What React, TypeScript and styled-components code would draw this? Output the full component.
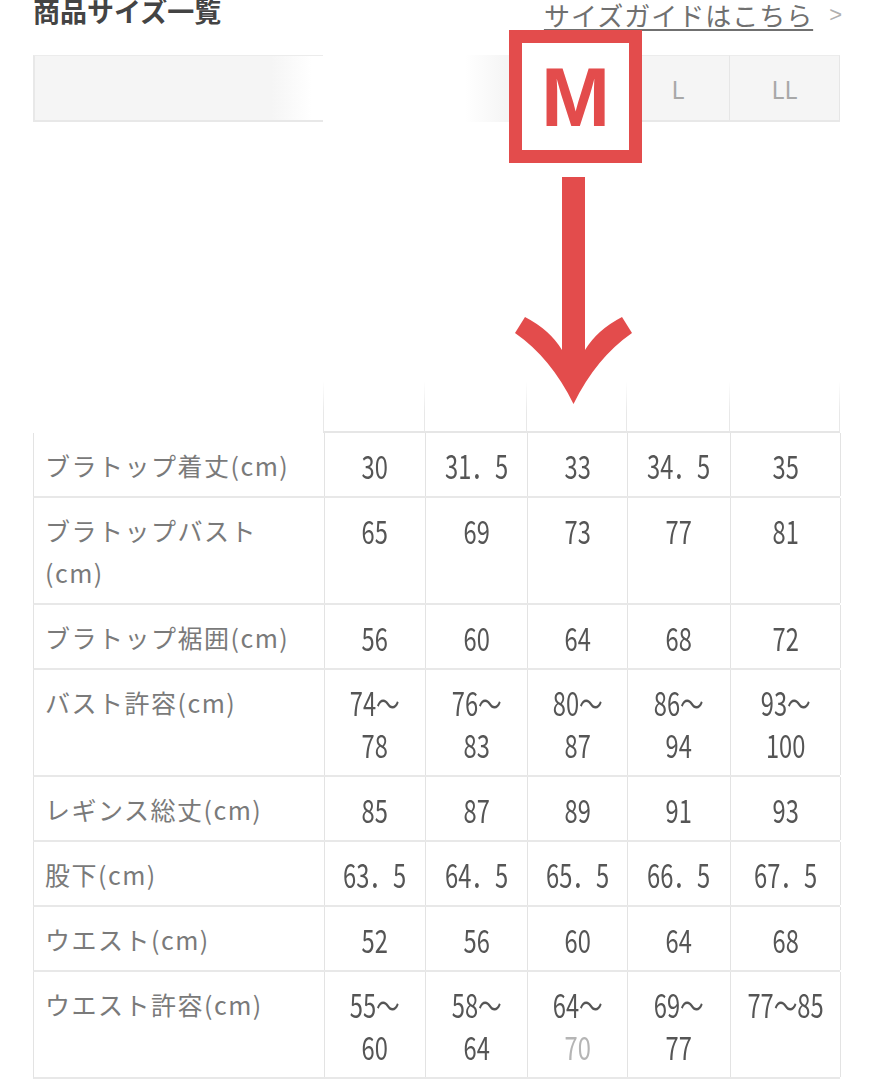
import styled, { createGlobalStyle } from 'styled-components';

type Row = {
  label: string;
  values: string[];
  faded?: number;
};

// "．" and "〜" are kept full-width like the shop's original table
const ROWS: Row[] = [
  { label: 'ブラトップ着丈(cm)', values: ['30', '31．5', '33', '34．5', '35'] },
  { label: 'ブラトップバスト\n(cm)', values: ['65', '69', '73', '77', '81'] },
  { label: 'ブラトップ裾囲(cm)', values: ['56', '60', '64', '68', '72'] },
  { label: 'バスト許容(cm)', values: ['74〜\n78', '76〜\n83', '80〜\n87', '86〜\n94', '93〜\n100'] },
  { label: 'レギンス総丈(cm)', values: ['85', '87', '89', '91', '93'] },
  { label: '股下(cm)', values: ['63．5', '64．5', '65．5', '66．5', '67．5'] },
  { label: 'ウエスト(cm)', values: ['52', '56', '60', '64', '68'] },
  { label: 'ウエスト許容(cm)', values: ['55〜\n60', '58〜\n64', '64〜\n70', '69〜\n77', '77〜85'], faded: 2 },
];

const COLUMNS = '290px 101px 102px 100px 103px 111px';

function App() {
  return (
    <>
      <GlobalStyle />
      <Page>
        <TopBar>
          <Title>商品サイズ一覧</Title>
          <GuideLink>
            <span>サイズガイドはこちら</span>
            <Chevron>&gt;</Chevron>
          </GuideLink>
        </TopBar>

        <SizeHeader>
          <HeadCell $tone="fadeOut" />
          <HeadCell $tone="blank" />
          <HeadCell $tone="fadeIn" />
          <HeadCell />
          <HeadCell $divided>L</HeadCell>
          <HeadCell $divided>LL</HeadCell>
        </SizeHeader>

        <Table>
          <GhostRow>
            <GhostCell $label />
            <GhostCell />
            <GhostCell />
            <GhostCell />
            <GhostCell />
            <GhostCell $last />
          </GhostRow>
          {ROWS.map((row) => (
            <TableRow key={row.label}>
              <LabelCell>{row.label}</LabelCell>
              {row.values.map((v, i) => (
                <ValueCell key={i} $last={i === row.values.length - 1}>
                  {v.split('\n').map((line, j) => (
                    <ValueLine key={j} $muted={row.faded === i && j === 1}>
                      {line}
                    </ValueLine>
                  ))}
                </ValueCell>
              ))}
            </TableRow>
          ))}
        </Table>

        <HighlightBox>M</HighlightBox>
        <Arrow viewBox="0 0 137 240" width="137" height="240">
          <path
            d="M68.5 234 Q46 188 10 163 L20 147 Q45 160 57 180 L57 7 L80 7 L80 180 Q92 160 117 147 L127 163 Q91 188 68.5 234 Z"
            fill="#e34c4c"
          />
        </Arrow>
      </Page>
    </>
  );
}

const GlobalStyle = createGlobalStyle`
  *, *::before, *::after { box-sizing: border-box; }
  html, body {
    margin: 0;
    background: #fff;
  }
  body {
    font-family: "Noto Sans CJK JP", "Noto Sans", sans-serif;
    overflow: hidden;
  }
`;

const Page = styled.div`
  position: relative;
  width: 874px;
  height: 1080px;
  padding: 0 34px 0 33px;
  overflow: hidden;
`;

const TopBar = styled.div`
  display: flex;
  justify-content: space-between;
  align-items: flex-start;
  height: 30px;
`;

const Title = styled.h2`
  margin: -4px 0 0;
  font-size: 27px;
  line-height: 30px;
  font-weight: 700;
  color: #444;
`;

const GuideLink = styled.a`
  display: flex;
  align-items: center;
  gap: 16px;
  margin-top: 1px;
  margin-right: -3px;
  font-size: 26px;
  line-height: 28px;
  color: #707070;
  span {
    text-decoration: underline;
    text-underline-offset: 3px;
    text-decoration-thickness: 2px;
    letter-spacing: 1px;
  }
`;

const Chevron = styled.span`
  font-family: "Liberation Sans", sans-serif;
  font-size: 22px;
  color: #b0b0b0;
  text-decoration: none !important;
`;

const SizeHeader = styled.div`
  display: grid;
  grid-template-columns: ${COLUMNS};
  height: 67px;
  margin-top: 25px;
`;

const HeadCell = styled.div<{ $tone?: 'fadeOut' | 'blank' | 'fadeIn'; $divided?: boolean }>`
  display: flex;
  align-items: center;
  justify-content: center;
  font-size: 24px;
  font-weight: 400;
  color: #a8a8a8;
  border-top: 1px solid #ececec;
  border-bottom: 2px solid #e8e8e8;
  border-left: ${(p) => (p.$divided ? '1px solid #e6e6e6' : 'none')};
  background: ${(p) =>
    p.$tone === 'fadeOut'
      ? 'linear-gradient(90deg, #f5f5f5 0%, #f5f5f5 82%, #fff 96%)'
      : p.$tone === 'fadeIn'
        ? 'linear-gradient(90deg, #fff 0%, #fff 40%, #f5f5f5 80%)'
        : p.$tone === 'blank'
          ? '#fff'
          : '#f5f5f5'};
  ${(p) => (p.$tone === 'fadeOut' ? 'border-left: 2px solid #e8e8e8;' : '')}
  ${(p) => (p.$tone === 'blank' || p.$tone === 'fadeIn' ? 'border-color: transparent;' : '')}
  &:last-child {
    border-right: 1px solid #e6e6e6;
  }
`;

const Table = styled.div`
  margin-top: 259px;
  display: flex;
  flex-direction: column;
`;

const GhostRow = styled.div`
  display: grid;
  grid-template-columns: ${COLUMNS};
  height: 52px;
`;

const GhostCell = styled.div<{ $label?: boolean; $last?: boolean }>`
  border-left: ${(p) => (p.$label ? 'none' : '1px solid #e8e8e8')};
  border-right: ${(p) => (p.$last ? '1px solid #e8e8e8' : 'none')};
  border-bottom: ${(p) => (p.$label ? 'none' : '2px solid #e6e6e6')};
  mask-image: linear-gradient(180deg, transparent 0%, #000 60%);
`;

const TableRow = styled.div`
  display: grid;
  grid-template-columns: ${COLUMNS};
  border-bottom: 2px solid #e8e8e8;
  border-left: 1px solid #e3e3e3;
`;

const LabelCell = styled.div`
  padding: 11px 10px 10px 11px;
  font-size: 25px;
  line-height: 42px;
  letter-spacing: 1.5px;
  color: #7a7a7a;
  white-space: pre-line;
`;

const ValueCell = styled.div<{ $last?: boolean }>`
  display: flex;
  flex-direction: column;
  align-items: center;
  padding: 11px 0 10px;
  border-left: 1px solid #e3e3e3;
  border-right: ${(p) => (p.$last ? '1px solid #e3e3e3' : 'none')};
`;

const ValueLine = styled.span<{ $muted?: boolean }>`
  display: inline-block;
  font-size: 32px;
  line-height: 42px;
  color: ${(p) => (p.$muted ? '#b5b5b5' : '#555')};
  white-space: nowrap;
  transform: scaleX(0.74);
`;

const HighlightBox = styled.div`
  position: absolute;
  left: 509px;
  top: 30px;
  width: 133px;
  height: 133px;
  border: 13px solid #e34c4c;
  background: #fff;
  display: flex;
  align-items: center;
  justify-content: center;
  font-family: "Liberation Sans", Arial, sans-serif;
  font-weight: 700;
  font-size: 83px;
  line-height: 1;
  color: #e34c4c;
  padding-top: 2px;
`;

const Arrow = styled.svg`
  position: absolute;
  left: 505px;
  top: 170px;
`;

export default App;
